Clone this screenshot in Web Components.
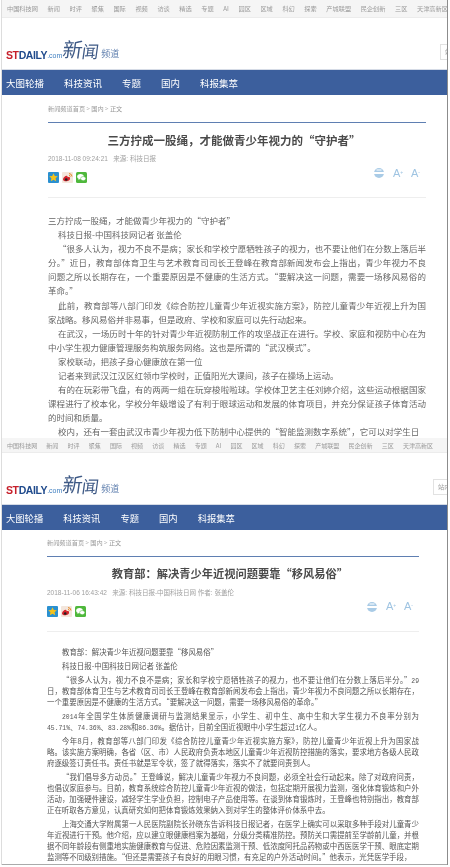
<!DOCTYPE html>
<html lang="zh">
<head>
<meta charset="utf-8">
<title>科技日报 新闻频道</title>
<style>
  html, body { margin: 0; background: #fff; }
  body { width: 450px; height: 867px; overflow: hidden; font-family: "Noto Sans CJK SC", "Liberation Sans", sans-serif; }
  .first {
    --bar-h: 17px; --bar-size: 6.2px; --bar-gap: 9.6px; --nav-size: 9.5px; --nav-gap: 20px;
    --side: 46px; --text-w: 378px; --title-size: 11.5px; --crumb-top: 9px; --head-top: 9px; --meta-top: 6px;
    --search-w: 7px; --body-size: 8.5px; --body-lh: 14.1px; --body-gap: 0px; --body-top: 15px; --indent: 10px;
    --body-color: #666;
    height: 438px;
  }
  .second {
    --bar-h: 14px; --bar-size: 6.05px; --bar-gap: 9.1px; --nav-size: 9.3px; --nav-gap: 20px;
    --side: 45px; --text-w: 372px; --title-size: 11.25px; --crumb-top: 8px; --head-top: 8px; --meta-top: 6.5px;
    --search-w: 14px; --body-size: 7.44px; --body-lh: 11px; --body-gap: 3px; --body-top: 14.4px; --indent: 15px;
    --body-color: #555;
    height: 426px; border-bottom: 1px solid #aaa;
  }
  .n { font-family: "Liberation Mono", monospace; font-size: 6.4px; line-height: 0; }
  /* last visible line of the first capture, it sits right above the next top bar */
  .tail { line-height: 12px; padding-top: 1px; }
</style>
</head>
<body>

<st-shot>
  <st-page class="first">
    <st-title slot="title">三方拧成一股绳，才能做青少年视力的“守护者”</st-title>
    <span slot="meta">2018-11-08 09:24:21 &nbsp;&nbsp;来源: 科技日报</span>
    <div>三方拧成一股绳，才能做青少年视力的“守护者”</div>
    <p>科技日报-中国科技网记者 张盖伦</p>
    <p>“很多人认为，视力不良不是病；家长和学校宁愿牺牲孩子的视力，也不要让他们在分数上落后半分。”近日，教育部体育卫生与艺术教育司司长王登峰在教育部新闻发布会上指出，青少年视力不良问题之所以长期存在，一个重要原因是不健康的生活方式。“要解决这一问题，需要一场移风易俗的革命。”</p>
    <p>此前，教育部等八部门印发《综合防控儿童青少年近视实施方案》，防控儿童青少年近视上升为国家战略。移风易俗并非易事，但是政府、学校和家庭可以先行动起来。</p>
    <p>在武汉，一场历时十年的针对青少年近视防制工作的攻坚战正在进行。学校、家庭和视防中心在为中小学生视力健康管理服务构筑服务网络。这也是所谓的“武汉模式”。</p>
    <p>家校联动，把孩子身心健康放在第一位</p>
    <p>记者来到武汉江汉区红领巾学校时，正值阳光大课间，孩子在操场上运动。</p>
    <p>有的在玩彩带飞盘，有的两两一组在玩穿梭啦啦球。学校体卫艺主任刘婷介绍，这些运动根据国家课程进行了校本化，学校分年级增设了有利于眼球运动和发展的体育项目，并充分保证孩子体育活动的时间和质量。</p>
    <p class="tail">校内，还有一套由武汉市青少年视力低下防制中心提供的“智能监测数字系统”，它可以对学生日</p>
  </st-page>

  <st-page class="second">
    <st-title slot="title">教育部：解决青少年近视问题要靠“移风易俗”</st-title>
    <span slot="meta">2018-11-06 16:43:42 &nbsp;&nbsp;来源: 科技日报-中国科技日网 作者: 张盖伦</span>
    <p>教育部：解决青少年近视问题要靠“移风易俗”</p>
    <p>科技日报-中国科技日网记者 张盖伦</p>
    <p>“很多人认为，视力不良不是病；家长和学校宁愿牺牲孩子的视力，也不要让他们在分数上落后半分。”<span class="n">29</span>日，教育部体育卫生与艺术教育司司长王登峰在教育部新闻发布会上指出，青少年视力不良问题之所以长期存在，一个重要原因是不健康的生活方式。“要解决这一问题，需要一场移风易俗的革命。”</p>
    <p><span class="n">2014</span>年全国学生体质健康调研与监测结果显示，小学生、初中生、高中生和大学生视力不良率分别为<span class="n">45.71%</span>、<span class="n">74.36%</span>、<span class="n">83.28%</span>和<span class="n">86.36%</span>。据估计，目前全国近视眼中小学生超过<span class="n">1</span>亿人。</p>
    <p>今年8月，教育部等八部门印发《综合防控儿童青少年近视实施方案》，防控儿童青少年近视上升为国家战略。该实施方案明确，各省（区、市）人民政府负责本地区儿童青少年近视防控措施的落实，要求地方各级人民政府逐级签订责任书。责任书就是军令状，签了就得落实，落实不了就要问责到人。</p>
    <p>“我们倡导多方动员。”王登峰说，解决儿童青少年视力不良问题，必须全社会行动起来。除了对政府问责，也倡议家庭参与。目前，教育系统综合防控儿童青少年近视的做法，包括定期开展视力监测，强化体育锻炼和户外活动，加强硬件建设，减轻学生学业负担，控制电子产品使用等。在谈到体育锻炼时，王登峰也特别指出，教育部正在听取各方意见，认真研究如何把体育锻炼效果纳入到对学生的整体评价体系中去。</p>
    <p>上海交通大学附属第一人民医院副院长孙晓东告诉科技日报记者，在医学上确实可以采取多种手段对儿童青少年近视进行干预。他介绍，应以建立眼健康档案为基础，分级分类精准防控。预防关口需提前至学龄前儿童，并根据不同年龄段有侧重地实施健康教育与促进、危险因素监测干预、低浓度阿托品药物或中西医医学干预、眼底定期监测等不同级别措施。“但还是需要孩子有良好的用眼习惯，有充足的户外活动时间。”他表示，光凭医学手段，</p>
  </st-page>
</st-shot>

<script>
class BaseElement extends HTMLElement {
  render(html) {
    const tpl = document.createElement('template');
    tpl.innerHTML = html;
    this.attachShadow({ mode: 'open' }).appendChild(tpl.content.cloneNode(true));
  }
}

const BAR_ITEMS = ['中国科技网', '新闻', '时评', '聚焦', '国际', '视频', '访谈', '精选', '专题', 'AI', '园区', '区域', '科幻', '探索', '产城联盟', '民企创新', '三区', '天津高新区'];
const NAV_ITEMS = ['大图轮播', '科技资讯', '专题', '国内', '科报集萃'];

customElements.define('st-shot', class extends BaseElement {
  connectedCallback() {
    this.render(`<style>
      :host {
        display: block;
        width: 445px;
        margin-left: 1px;
        border-left: 1px solid #ddd;
        border-right: 1px solid #8c8c8c;
        filter: blur(.3px);
      }
    </style><slot></slot>`);
  }
});

customElements.define('st-topbar', class extends BaseElement {
  connectedCallback() {
    const items = BAR_ITEMS.map(t => `<span>${t}</span>`).join('');
    this.render(`<style>
      :host {
        display: flex;
        align-items: center;
        gap: var(--bar-gap);
        height: var(--bar-h);
        padding: 0 0 0 5px;
        background: #f5f5f5;
        border-bottom: 1px solid #ececec;
        color: #9a9a9a;
        font-size: var(--bar-size);
        white-space: nowrap;
        overflow: hidden;
      }
      span { flex: none; }
    </style>${items}`);
  }
});

customElements.define('st-logo', class extends BaseElement {
  connectedCallback() {
    this.render(`<style>
      :host { display: flex; align-items: flex-end; height: 24px; color: #3c5f9d; white-space: nowrap; }
      .st { font: bold 10.5px/10px "Liberation Sans", sans-serif; color: #c6202b; letter-spacing: -.4px; }
      .daily { font: bold 10.5px/10px "Liberation Sans", sans-serif; color: #1f4a8c; letter-spacing: -.4px; }
      .com { font: 7px/9px "Liberation Sans", sans-serif; color: #3f7fc0; margin-right: 1px; }
      .xin, .wen { color: #3f5a86; font-weight: 400; display: inline-block; transform: skewX(-8deg); }
      .xin { font-size: 20px; line-height: 23px; }
      .wen { font-size: 17px; line-height: 19px; margin-left: -1px; }
      .ch { font-size: 9px; line-height: 12px; margin-left: 2px; color: #5f7fae; }
    </style><span class="st">ST</span><span class="daily">DAILY</span><span class="com">.com</span><span class="xin">新</span><span class="wen">闻</span><span class="ch">频道</span>`);
  }
});

customElements.define('st-search', class extends BaseElement {
  connectedCallback() {
    this.render(`<style>
      :host {
        display: block;
        flex: none;
        width: var(--search-w);
        height: 16px;
        box-sizing: border-box;
        border: 1px solid #e2e2e2;
        border-right: 0;
        padding-left: 4px;
        color: #999;
        font-size: 6.2px;
        line-height: 14px;
        white-space: nowrap;
        overflow: hidden;
      }
    </style>站内`);
  }
});

customElements.define('st-nav', class extends BaseElement {
  connectedCallback() {
    const items = NAV_ITEMS.map(t => `<span>${t}</span>`).join('');
    this.render(`<style>
      :host {
        display: flex;
        align-items: center;
        gap: var(--nav-gap);
        height: 25px;
        padding-left: 4px;
        background: #3c5f9d;
        border-top: 1px solid #d5dbe6;
        color: #fff;
        font-size: var(--nav-size);
      }
    </style>${items}`);
  }
});

customElements.define('st-title', class extends BaseElement {
  connectedCallback() {
    this.render(`<style>
      :host {
        display: block;
        padding-right: 6px;
        text-align: center;
        color: #4a4a4a;
        font-size: var(--title-size);
        font-weight: bold;
        line-height: 16px;
      }
    </style><slot></slot>`);
  }
});

customElements.define('st-share', class extends BaseElement {
  connectedCallback() {
    this.render(`<style>
      :host { display: flex; gap: 3px; }
      svg { display: block; width: 11px; height: 11px; }
    </style>
    <svg viewBox="0 0 11 11"><rect width="11" height="11" rx="1" fill="#2a90d0"/><path d="M5.5 1.2l1.3 2.8 3 .3-2.2 2 .6 3-2.7-1.500-2.700 1.500.6-3-2.200-2 3-.3z" fill="#f4c21c"/></svg>
    <svg viewBox="0 0 11 11"><rect width="11" height="11" rx="1" fill="#f3e6dc"/><path d="M7 1.500a3.200 3.200 0 0 1 3 3M7 3.300a1.400 1.400 0 0 1 1.300 1.300" fill="none" stroke="#e88a2a" stroke-width="1"/><path d="M1 7.400c0-1.700 2.200-3.500 3.700-3.600.9 0 1 .8.8 1.400 1.500-.5 2.700 0 2.500 1.100.5 1.700-2 3-4 3-1.600 0-3-.8-3-1.900z" fill="#d4232b"/><circle cx="4.200" cy="7.500" r="1.300" fill="#222"/></svg>
    <svg viewBox="0 0 11 11"><rect width="11" height="11" rx="1.500" fill="#4fb83c"/><ellipse cx="4.500" cy="4.600" rx="3.300" ry="2.700" fill="#fff"/><path d="M2.800 6.600l-.5 1.400 1.700-.9z" fill="#fff"/><ellipse cx="7.200" cy="6.600" rx="2.600" ry="2.100" fill="#fff" stroke="#4fb83c" stroke-width=".5"/></svg>`);
  }
});

customElements.define('st-tools', class extends BaseElement {
  connectedCallback() {
    this.render(`<style>
      :host { display: flex; align-items: center; gap: 9px; color: #9fc4e2; font: 11px/11px "Liberation Sans", sans-serif; }
      svg { display: block; width: 10px; height: 10px; }
      sup { font-size: 5px; line-height: 0; vertical-align: 3px; }
      span { display: inline-block; width: 9px; white-space: nowrap; }
    </style>
    <svg viewBox="0 0 10 10"><circle cx="5" cy="5" r="5" fill="#a9cbe6"/><rect x="0" y="4" width="10" height="2" fill="#fff"/><rect x="2.500" y="1" width="5" height="2" fill="#d5e6f3"/></svg>
    <span>A<sup>+</sup></span>
    <span>A<sup>-</sup></span>`);
  }
});

customElements.define('st-page', class extends BaseElement {
  connectedCallback() {
    this.render(`<style>
      :host { display: block; overflow: hidden; background: #fff; }
      .masthead {
        display: flex;
        justify-content: space-between;
        align-items: flex-end;
        height: 51px;
        box-sizing: border-box;
        padding: 0 0 9px 4px;
      }
      .article { margin-left: var(--side); width: var(--text-w); }
      .crumb {
        color: #9b9b9b;
        font-size: 6.2px;
        line-height: 9px;
        padding: var(--crumb-top) 0 9px;
        border-bottom: 1px solid #5f7fb2;
      }
      .head { padding-top: var(--head-top); }
      .meta {
        color: #a0a0a0;
        font: 6.5px/9px "Liberation Sans", "Noto Sans CJK SC", sans-serif;
        margin-top: var(--meta-top);
      }
      .actions {
        display: flex;
        justify-content: space-between;
        align-items: flex-start;
        height: 25px;
        padding-top: 9px;
        border-bottom: 1px solid #eeeeee;
      }
      st-tools { margin-right: 6px; margin-top: -4.5px; }
      .body {
        padding-top: var(--body-top);
        color: var(--body-color);
        font-size: var(--body-size);
        line-height: var(--body-lh);
        text-align: justify;
      }
      ::slotted(p) { margin: 0 0 var(--body-gap); text-indent: var(--indent); }
      ::slotted(div) { margin: 0 0 var(--body-gap); }
    </style>
    <st-topbar></st-topbar>
    <div class="masthead"><st-logo></st-logo><st-search></st-search></div>
    <st-nav></st-nav>
    <div class="article">
      <div class="crumb">新闻频道首页 &gt; 国内 &gt; 正文</div>
      <div class="head">
        <slot name="title"></slot>
        <div class="meta"><slot name="meta"></slot></div>
        <div class="actions"><st-share></st-share><st-tools></st-tools></div>
      </div>
      <div class="body"><slot></slot></div>
    </div>`);
  }
});
</script>
</body>
</html>
